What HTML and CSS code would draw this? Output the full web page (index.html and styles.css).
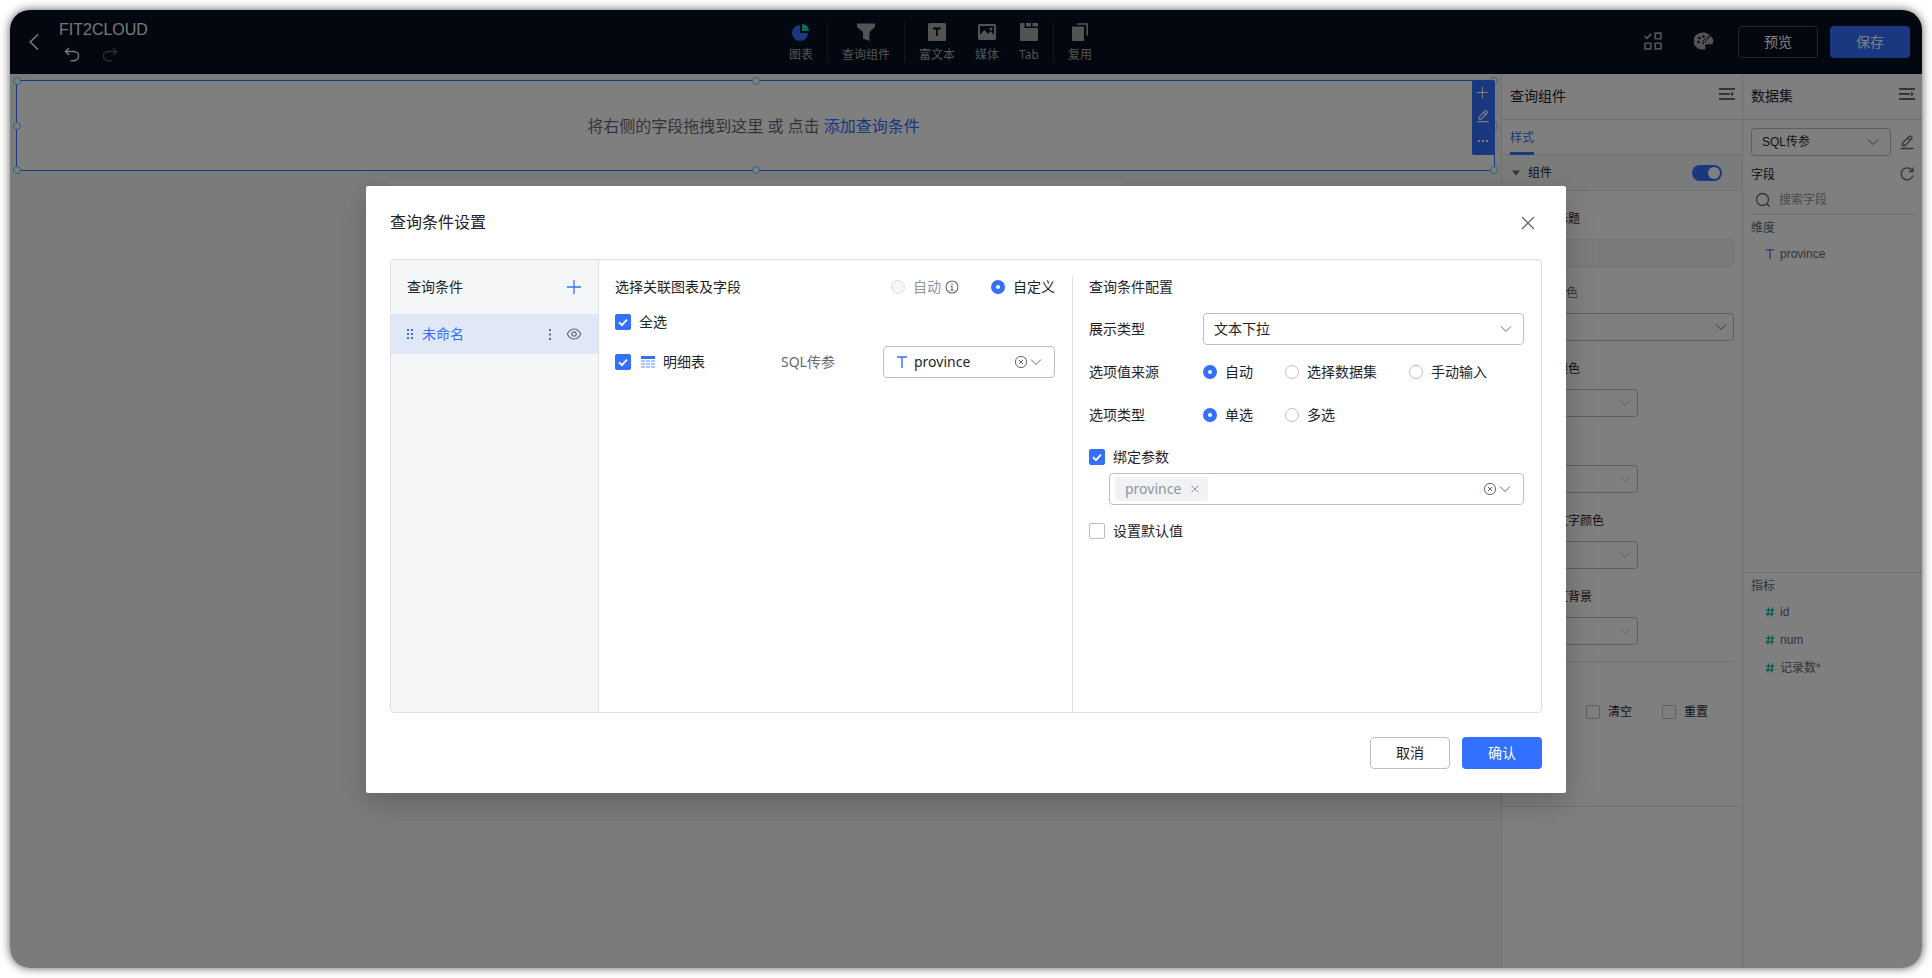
FILE: index.html
```html
<!DOCTYPE html>
<html lang="zh-CN">
<head>
<meta charset="utf-8">
<title>FIT2CLOUD</title>
<link rel="stylesheet" href="styles.css">
</head>
<body>
<svg class="sprite" aria-hidden="true">
  <symbol id="i-chevron" viewBox="0 0 12 12"><path d="M1 3.5l5 5 5-5" fill="none" stroke="currentColor"/></symbol>
  <symbol id="i-clear" viewBox="0 0 14 14"><circle cx="7" cy="7" r="5.6" fill="none" stroke="currentColor"/><path d="M5 5l4 4M9 5l-4 4" stroke="currentColor"/></symbol>
  <symbol id="i-plus" viewBox="0 0 16 16"><path d="M8 1v14M1 8h14" stroke="currentColor" stroke-width="1.3"/></symbol>
  <symbol id="i-edit" viewBox="0 0 16 16"><path d="M3.5 11.5V9L10.4 2.2q.7-.7 1.4 0l1 1q.7.7 0 1.4L6 11.5zM8.8 4l2.4 2.4M1.5 14.5h13" fill="none" stroke="currentColor" stroke-width="1.3"/></symbol>
  <symbol id="i-fold" viewBox="0 0 16 14"><path d="M0 2h16M0 7h11M0 12h16" stroke="currentColor" stroke-width="2"/><path d="M12 4.500v5l3-2.500z" fill="currentColor"/></symbol>
  <symbol id="i-hash" viewBox="0 0 10 10"><path d="M3.8 .5l-1.1 9M7.6 .5l-1.1 9M1 3.2h8.3M.6 6.8h8.3" fill="none" stroke="currentColor" stroke-width="1.2"/></symbol>
  <symbol id="i-text" viewBox="0 0 10 12"><path d="M0 1h10M5 1v11" fill="none" stroke="currentColor" stroke-width="1.4"/></symbol>
</svg>
<div class="window">
  <header class="topbar">
    <div class="brand">
      <button class="icon-btn back" aria-label="返回"><svg width="10" height="16" viewBox="0 0 10 16"><path d="M9 .5L1.2 8 9 15.5" fill="none" stroke="currentColor" stroke-width="1.6"/></svg></button>
      <div class="brand-text">
        <h1>FIT2CLOUD</h1>
        <div class="history">
          <button class="icon-btn" aria-label="撤销"><svg width="16" height="16" viewBox="0 0 16 16"><path d="M5 1L1.5 4.5 5 8M1.5 4.5H10a4.6 4.6 0 0 1 0 9.2H6.5" fill="none" stroke="currentColor" stroke-width="1.4"/></svg></button>
          <button class="icon-btn faded" aria-label="重做"><svg width="16" height="16" viewBox="0 0 16 16"><path d="M11 1l3.500 3.500L11 8M14.500 4.500H6a4.600 4.600 0 0 0 0 9.200h3.500" fill="none" stroke="currentColor" stroke-width="1.400"/></svg></button>
        </div>
      </div>
    </div>
    <nav class="tools">
      <div class="tool-group">
        <button class="tool"><svg width="18" height="18" viewBox="0 0 18 18"><path d="M8 2v8h8a8 8 0 1 1-8-8z" fill="#3370ff"/><path d="M10 1a7 7 0 0 1 7 7h-7z" fill="#00d6b9"/></svg>图表</button>
      </div>
      <div class="tool-group">
        <button class="tool"><svg width="18" height="18" viewBox="0 0 18 18"><path d="M0 .5h18V4l-5.500 5v9L6 15.500V9L0 4z" fill="currentColor"/></svg>查询组件</button>
      </div>
      <div class="tool-group">
        <button class="tool"><svg width="18" height="18" viewBox="0 0 18 18"><rect width="18" height="18" rx="1.500" fill="currentColor"/><path d="M5 5.500h8M9 5.500V13" stroke="#050e21" stroke-width="1.800"/></svg>富文本</button>
        <button class="tool"><svg width="18" height="18" viewBox="0 0 18 18"><rect x="0" y="1" width="18" height="16" rx="1.500" fill="currentColor"/><path d="M2 3h14v9l-3.500-4-2.500 3-3.500-4L2 11.500z" fill="#050e21"/><circle cx="13" cy="6" r="1.500" fill="currentColor"/></svg>媒体</button>
        <button class="tool"><svg width="18" height="18" viewBox="0 0 18 18"><path d="M0 1q0-1 1-1h3.500v5H18v12q0 1-1 1H1q-1 0-1-1zM6 0h5v3.500H6zM12.500 0H17q1 0 1 1v2.500h-5.500z" fill="currentColor"/></svg>Tab</button>
      </div>
      <div class="tool-group">
        <button class="tool"><svg width="18" height="18" viewBox="0 0 18 18"><path d="M1 4q0-.5.5-.5H13V18H2q-1 0-1-1z" fill="currentColor"/><path d="M6 1h10.200v11.500" fill="none" stroke="currentColor" stroke-width="1.600"/></svg>复用</button>
      </div>
    </nav>
    <div class="actions">
      <button class="icon-btn soft" aria-label="批量"><svg width="18" height="18" viewBox="0 0 16 16"><path d="M.5 3.500l2 2.200L6.500 1.500M10 1h5v5h-5zM1 10h5v5H1zM10 10h5v5h-5z" fill="none" stroke="currentColor" stroke-width="1.500"/></svg></button>
      <button class="icon-btn soft" aria-label="配色"><svg width="20" height="18" viewBox="0 0 20 18"><path d="M14.500 2.200A9.500 8.500 0 1 0 9 17.500c2.500.5 3-.8 2.300-2.500-.6-1.600.2-2.800 2-2.800h3.700c2.800 0 2.800-3.500 1.700-6z" fill="currentColor"/><path d="M20 0l-8 9-3.500 3 1-3.500z" fill="currentColor" stroke="#050e21" stroke-width=".8"/><g fill="#050e21"><circle cx="4.500" cy="10" r="1.200"/><circle cx="5.500" cy="6" r="1.200"/><circle cx="9.500" cy="4.500" r="1.200"/></g></svg></button>
      <div class="action-buttons">
        <button class="btn outline-dark">预览</button>
        <button class="btn primary">保存</button>
      </div>
    </div>
  </header>

  <main class="workspace">
    <section class="canvas">
      <div class="query-widget">
        <p>将右侧的字段拖拽到这里 或 点击 <a href="#">添加查询条件</a></p>
        <i class="handle tl"></i><i class="handle tc"></i><i class="handle tr"></i>
        <i class="handle ml"></i><i class="handle mr"></i>
        <i class="handle bl"></i><i class="handle bc"></i><i class="handle br"></i>
        <div class="widget-bar">
          <button class="icon-btn" aria-label="添加"><svg width="13" height="13"><use href="#i-plus"/></svg></button>
          <button class="icon-btn" aria-label="编辑"><svg width="14" height="14"><use href="#i-edit"/></svg></button>
          <button class="icon-btn" aria-label="更多"><svg width="12" height="4" viewBox="0 0 12 4" fill="currentColor"><path d="M1 1h2v2H1zM5 1h2v2H5zM9 1h2v2H9z"/></svg></button>
        </div>
      </div>
      <div class="table-widget"><h2>明细表</h2></div>
    </section>

    <aside class="style-panel">
      <div class="panel-head"><h2>查询组件</h2><button class="icon-btn" aria-label="收起"><svg width="16" height="14"><use href="#i-fold"/></svg></button></div>
      <div class="tabs"><a href="#" class="tab">样式</a></div>
      <div class="section-head">
        <svg width="8" height="6" viewBox="0 0 8 6"><path d="M0 .5h8L4 5.500z" fill="#646a73"/></svg>
        <label for="comp-on">组件</label>
        <input id="comp-on" type="checkbox" class="toggle" checked>
      </div>
      <div class="fields">
        <div class="field-set">
          <div class="field">
            <label class="check"><input type="checkbox" checked>显示标题</label>
            <input type="text" class="box disabled" aria-label="标题" disabled>
          </div>
          <div class="field">
            <label class="sub" for="c1">标题颜色</label>
            <div class="select"><select id="c1"><option></option></select><svg><use href="#i-chevron"/></svg></div>
          </div>
        </div>
        <div class="field">
          <label class="check"><input type="checkbox">边框颜色</label>
          <div class="select short"><select aria-label="边框颜色值"><option></option></select><svg><use href="#i-chevron"/></svg></div>
        </div>
        <div class="field">
          <label class="check"><input type="checkbox">文字</label>
          <div class="select short"><select aria-label="文字值"><option></option></select><svg><use href="#i-chevron"/></svg></div>
        </div>
        <div class="field">
          <label class="check"><input type="checkbox">提示文字颜色</label>
          <div class="select short"><select aria-label="提示文字颜色值"><option></option></select><svg><use href="#i-chevron"/></svg></div>
        </div>
        <div class="field">
          <label class="check"><input type="checkbox">按钮区背景</label>
          <div class="select short"><select aria-label="背景值"><option></option></select><svg><use href="#i-chevron"/></svg></div>
        </div>
      </div>
      <div class="button-set">
        <span>展示按钮</span>
        <div class="checks">
          <label class="check"><input type="checkbox" checked>查询</label>
          <label class="check"><input type="checkbox">清空</label>
          <label class="check"><input type="checkbox">重置</label>
        </div>
      </div>
    </aside>

    <aside class="data-panel">
      <div class="panel-head"><h2>数据集</h2><button class="icon-btn" aria-label="收起"><svg width="16" height="14"><use href="#i-fold"/></svg></button></div>
      <div class="data-source">
        <div class="row">
          <div class="select"><select aria-label="数据集"><option>SQL传参</option></select><svg><use href="#i-chevron"/></svg></div>
          <button class="icon-btn" aria-label="编辑数据集"><svg width="16" height="16"><use href="#i-edit"/></svg></button>
        </div>
        <div class="row between"><span>字段</span><button class="icon-btn" aria-label="刷新"><svg width="16" height="16" viewBox="0 0 16 16"><path d="M13.200 4.500A6 6 0 1 0 14 9.500M14 1.500V5.500H10" fill="none" stroke="currentColor" stroke-width="1.300"/></svg></button></div>
        <label class="search">
          <svg width="16" height="16" viewBox="0 0 16 16"><circle cx="7.500" cy="7.500" r="6" fill="none" stroke="currentColor" stroke-width="1.300"/><path d="M11.800 11.800l3 3" stroke="currentColor" stroke-width="1.300"/></svg>
          <input type="text" placeholder="搜索字段">
        </label>
      </div>
      <div class="dims">
        <h3>维度</h3>
        <ul><li><svg class="blue" width="8" height="10"><use href="#i-text"/></svg>province</li></ul>
      </div>
      <div class="metrics">
        <h3>指标</h3>
        <ul>
          <li><svg class="teal" width="10" height="10"><use href="#i-hash"/></svg>id</li>
          <li><svg class="teal" width="10" height="10"><use href="#i-hash"/></svg>num</li>
          <li><svg class="teal" width="10" height="10"><use href="#i-hash"/></svg>记录数*</li>
        </ul>
      </div>
    </aside>
  </main>

  <div class="overlay">
    <div class="dialog" role="dialog" aria-labelledby="dlg-title">
      <div class="dialog-head">
        <h2 id="dlg-title">查询条件设置</h2>
        <button class="icon-btn" aria-label="关闭"><svg width="14" height="14" viewBox="0 0 14 14"><path d="M1 1l12 12M13 1L1 13" stroke="currentColor" stroke-width="1.300"/></svg></button>
      </div>
      <div class="dialog-body">
        <div class="conditions">
          <div class="cond-head"><h3>查询条件</h3><button class="icon-btn add" aria-label="新增"><svg width="16" height="16"><use href="#i-plus"/></svg></button></div>
          <div class="cond-item">
            <svg class="blue" width="7" height="12" viewBox="0 0 7 12" fill="currentColor"><path d="M0 1h2v2H0zM4 1h2v2H4zM0 5h2v2H0zM4 5h2v2H4zM0 9h2v2H0zM4 9h2v2H4z"/></svg>
            <span class="blue">未命名</span>
            <button class="icon-btn" aria-label="更多"><svg width="16" height="16" viewBox="0 0 16 16" fill="currentColor"><path d="M7 3h2v2H7zM7 7.500h2v2H7zM7 12h2v2H7z"/></svg></button>
            <button class="icon-btn" aria-label="显示"><svg width="16" height="16" viewBox="0 0 16 16"><path d="M1.200 8Q4 3 8 3t6.800 5Q12 13 8 13T1.200 8z" fill="none" stroke="currentColor" stroke-width="1.200"/><circle cx="8" cy="8" r="2.200" fill="none" stroke="currentColor" stroke-width="1.200"/></svg></button>
          </div>
        </div>
        <div class="relations">
          <div class="rel-head">
            <h3>选择关联图表及字段</h3>
            <div class="radios">
              <label class="radio off"><input type="radio" name="mode" disabled>自动<svg width="14" height="14" viewBox="0 0 14 14"><circle cx="7" cy="7" r="6" fill="none" stroke="#646a73" stroke-width="1.100"/><path d="M7 3.200v1.500M5.500 6.200H7v4M5.300 10.200h3.400" fill="none" stroke="#646a73" stroke-width="1.100"/></svg></label>
              <label class="radio"><input type="radio" name="mode" checked>自定义</label>
            </div>
          </div>
          <label class="check big"><input type="checkbox" checked>全选</label>
          <div class="rel-row">
            <label class="check big"><input type="checkbox" checked><svg class="tbl" width="14" height="14" viewBox="1 0 14 14"><path d="M1 1h14v3H1z" fill="#3370ff"/><path d="M1 5h4v2H1zM6 5h4v2H6zM11 5h4v2h-4zM1 8h4v2H1zM6 8h4v2H6zM11 8h4v2h-4zM1 11h4v2H1zM6 11h4v2H6zM11 11h4v2h-4z" fill="#adc6ff"/></svg>明细表</label>
            <span class="ds">SQL传参</span>
            <div class="combo">
              <svg class="blue" width="10" height="12"><use href="#i-text"/></svg>
              <select aria-label="字段"><option>province</option></select>
              <button class="icon-btn" aria-label="清除"><svg width="14" height="14"><use href="#i-clear"/></svg></button>
              <svg width="12" height="12"><use href="#i-chevron"/></svg>
            </div>
          </div>
        </div>
        <div class="config">
          <h3>查询条件配置</h3>
          <div class="form-row"><label for="show-type">展示类型</label><div class="select large"><select id="show-type"><option>文本下拉</option></select><svg><use href="#i-chevron"/></svg></div></div>
          <div class="form-row"><span>选项值来源</span><div class="radios">
            <label class="radio"><input type="radio" name="src" checked>自动</label>
            <label class="radio"><input type="radio" name="src">选择数据集</label>
            <label class="radio"><input type="radio" name="src">手动输入</label></div></div>
          <div class="form-row"><span>选项类型</span><div class="radios">
            <label class="radio"><input type="radio" name="kind" checked>单选</label>
            <label class="radio"><input type="radio" name="kind">多选</label></div></div>
          <div class="bind">
            <label class="check big"><input type="checkbox" checked>绑定参数</label>
            <div class="combo tags">
              <span class="tag">province<button class="icon-btn" aria-label="移除"><svg width="8" height="8" viewBox="0 0 8 8"><path d="M.5 .5l7 7M7.500 .5l-7 7" stroke="currentColor"/></svg></button></span>
              <input type="text" aria-label="参数">
              <button class="icon-btn" aria-label="清除"><svg width="14" height="14"><use href="#i-clear"/></svg></button>
              <svg width="12" height="12"><use href="#i-chevron"/></svg>
            </div>
          </div>
          <label class="check big"><input type="checkbox">设置默认值</label>
        </div>
      </div>
      <div class="dialog-foot">
        <button class="btn outline">取消</button>
        <button class="btn primary">确认</button>
      </div>
    </div>
  </div>
</div>
</body>
</html>
```

FILE: styles.css
```css
* { box-sizing: border-box; }
body {
  margin: 0;
  padding: 10px;
  background: #fff;
  color: #1f2329;
  font: 14px/22px "Noto Sans", "Noto Sans CJK SC", sans-serif;
}
h1, h2, h3, p, ul { margin: 0; padding: 0; font-weight: 400; }
ul { list-style: none; }
a { color: #3370ff; text-decoration: none; }
button, input, select { font: inherit; color: inherit; margin: 0; }
svg { flex: none; display: block; }
.sprite { position: absolute; width: 0; height: 0; }
.blue { color: #3370ff; }
.teal { color: #04b49c; }

.window {
  position: relative;
  display: flex;
  flex-direction: column;
  min-height: calc(100vh - 20px);
  border-radius: 20px;
  overflow: hidden;
  box-shadow: 0 0 10px rgba(0, 0, 0, .65);
}

.icon-btn {
  display: grid;
  place-items: center;
  border: 0;
  padding: 0;
  background: none;
  color: #646a73;
}
.icon-btn.add { color: #3370ff; }
.btn {
  width: 80px;
  height: 32px;
  border: 1px solid transparent;
  border-radius: 4px;
  padding: 0;
}
.btn.primary { background: #3370ff; color: #fff; }
.btn.outline { background: #fff; border-color: #bbbfc4; }
.btn.outline-dark { background: none; border-color: #4b505c; color: #fff; }

/* Top bar */
.topbar {
  display: flex;
  align-items: center;
  height: 64px;
  padding-right: 12px;
  background: #050e21;
  color: #a6a6a6;
}
.topbar .icon-btn { color: #f0f0f0; }
.topbar .icon-btn.faded { color: #5a5a5f; }
.topbar .icon-btn.soft { color: #a6a6a6; padding-bottom: 2px; }
.brand { display: flex; align-items: center; gap: 20px; width: 227px; padding-left: 19px; }
.brand-text { padding-bottom: 2px; }
.brand h1 { font: 16px/22px "Liberation Sans", sans-serif; color: #fff; opacity: .92; }
.history { display: flex; gap: 22px; padding-left: 5px; margin-top: 6px; }
.tools { display: flex; flex: 1; justify-content: center; }
.tool-group { display: flex; gap: 20px; height: 40px; padding: 0 14px; border-left: 1px solid #2a3142; }
.tool-group:first-child { border-left: 0; }
.tool {
  display: flex;
  flex-direction: column;
  align-items: center;
  gap: 5px;
  padding: 1px 0 0;
  border: 0;
  background: none;
  font-size: 12px;
  line-height: 18px;
}
.actions { display: flex; align-items: center; gap: 32px; }
.action-buttons { display: flex; gap: 12px; margin-left: -8px; }

/* Workspace */
.workspace { display: grid; grid-template-columns: 1fr 241px 180px; flex: 1; }
.canvas { padding: 6px; background: #f5f8f7; }
.query-widget {
  position: relative;
  display: grid;
  place-items: center;
  height: 91px;
  padding-right: 4px;
  border: 1px solid #3370ff;
  background: #fff;
  color: #646a73;
  font-size: 16px;
}
.table-widget { margin: 9px 372px; padding: 4px 8px; background: #fff; }
.table-widget h2 { font-size: 16px; font-weight: 700; }
.handle {
  position: absolute;
  width: 8px;
  height: 8px;
  border: 1px solid #59c7f9;
  border-radius: 50%;
  background: #fff;
  transform: translate(-50%, -50%);
}
.tl, .tc, .tr { top: 0; }
.ml, .mr { top: 50%; }
.bl, .bc, .br { top: 100%; }
.tl, .ml, .bl { left: 0; }
.tc, .bc { left: 50%; }
.tr, .mr, .br { left: 100%; }
.widget-bar {
  position: absolute;
  top: -1px;
  right: -1px;
  display: flex;
  flex-direction: column;
  justify-content: space-around;
  width: 23px;
  height: 75px;
  padding: 0 2px 2px 0;
  border-radius: 2px;
  background: #3370ff;
}
.widget-bar .icon-btn { color: #fff; height: 20px; }

.style-panel, .data-panel {
  border-left: 1px solid #dee0e3;
  background: #fff;
  font: 12px/20px "Liberation Sans", "Noto Sans CJK SC", sans-serif;
}
.panel-head {
  display: flex;
  justify-content: space-between;
  align-items: center;
  height: 46px;
  padding: 0 7px 2px 8px;
  border-bottom: 1px solid #dee0e3;
}
.panel-head h2 { font-size: 14px; }
.panel-head .icon-btn { padding-bottom: 3px; }
.tabs { display: flex; height: 35px; padding: 0 8px; border-bottom: 1px solid #dee0e3; }
.tab { margin-bottom: -1px; border-bottom: 3px solid #3370ff; line-height: 36px; height: 35px; }
.section-head {
  display: flex;
  align-items: center;
  gap: 8px;
  height: 36px;
  padding: 0 20px 0 10px;
  border-bottom: 1px solid #dee0e3;
  background: #f5f8f7;
}
.toggle {
  appearance: none;
  display: flex;
  justify-content: flex-end;
  width: 30px;
  height: 16px;
  margin-left: auto;
  padding: 2px;
  border-radius: 8px;
  background: #3370ff;
}
.toggle::after { content: ""; width: 12px; height: 12px; border-radius: 50%; background: #fff; }
.fields {
  display: flex;
  flex-direction: column;
  gap: 18px;
  margin: 0 8px;
  padding: 18px 0 16px;
  border-bottom: 1px solid #dee0e3;
}
.field-set { display: grid; gap: 16px; }
.field { display: grid; gap: 10px; }
.sub { padding-left: 20px; color: #646a73; }
.box { height: 28px; width: 100%; border: 1px solid #bbbfc4; border-radius: 4px; }
.box.disabled { background: #f5f7fa; border-color: #e4e7ed; }
.select { position: relative; height: 28px; }
.select.short { width: 128px; }
.select.short svg { color: #bbbfc4; }
.select select {
  appearance: none;
  width: 100%;
  height: 100%;
  padding: 0 10px;
  border: 1px solid #bbbfc4;
  border-radius: 4px;
  background: #fff;
}
.select svg {
  position: absolute;
  top: calc(50% - 6px);
  right: 12px;
  width: 12px;
  height: 12px;
  color: #646a73;
  pointer-events: none;
}
.field .select svg { right: 7px; }
.select.large { flex: 1; height: 32px; }
.button-set { display: grid; gap: 10px; padding: 10px 8px 84px; border-bottom: 1px solid #dee0e3; }
.checks { display: flex; gap: 30px; }

.check { display: flex; align-items: center; gap: 8px; }
.check input {
  appearance: none;
  flex: none;
  width: 14px;
  height: 14px;
  border: 1px solid #bbbfc4;
  border-radius: 2px;
  background: #fff;
}
.check.big input { width: 16px; height: 16px; }
.check input:checked {
  border-color: #3370ff;
  background: #3370ff url("data:image/svg+xml,%3Csvg xmlns='http://www.w3.org/2000/svg' viewBox='0 0 14 14'%3E%3Cpath d='M3 7.200l2.900 2.900L11 4.600' fill='none' stroke='white' stroke-width='1.800'/%3E%3C/svg%3E") center / 14px;
}

/* Dataset panel */
.data-panel { display: flex; flex-direction: column; }
.data-source { display: grid; grid-template-columns: minmax(0, 1fr); padding: 8px 7px 0 8px; }
.row { display: flex; align-items: center; gap: 8px; }
.row .select { flex: 1; }
.between { justify-content: space-between; height: 34px; padding-top: 4px; }
.between .icon-btn { padding-bottom: 3px; }
.search {
  display: flex;
  align-items: center;
  gap: 8px;
  height: 25px;
  padding: 0 4px 5px;
  border-bottom: 1px solid #dee0e3;
  color: #646a73;
}
.search input { flex: 1; min-width: 0; padding: 0; border: 0; background: none; outline: 0; }
.search input::placeholder { color: #8f959e; }
.dims { flex: 9; padding: 3px 8px; color: #646a73; }
.metrics { flex: 10; padding: 3px 8px; border-top: 1px solid #dee0e3; color: #646a73; }
.data-panel h3 { font-size: 12px; }
.data-panel li { display: flex; align-items: center; gap: 5px; height: 28px; padding-left: 14px; }
.data-panel li svg { width: 10px; }
.data-panel ul { margin-top: 2px; }

/* Dialog */
.overlay {
  position: absolute;
  inset: 0;
  display: flex;
  justify-content: center;
  align-items: flex-start;
  padding-top: 176px;
  background: rgba(0, 0, 0, .5);
}
.dialog {
  display: flex;
  flex-direction: column;
  gap: 24px;
  width: 1200px;
  max-width: 100%;
  padding: 24px;
  border-radius: 2px;
  background: #fff;
  box-shadow: 0 12px 32px rgba(0, 0, 0, .12), 0 8px 20px rgba(0, 0, 0, .08);
}
.dialog-head { display: flex; justify-content: space-between; align-items: center; padding-right: 7px; }
.dialog-head h2 { font-size: 16px; line-height: 25px; }
.dialog-body {
  display: grid;
  grid-template-columns: 208px 474px 1fr;
  min-height: 454px;
  border: 1px solid #dee0e3;
  border-radius: 4px;
  overflow: hidden;
}
.dialog h3 { font-size: 14px; }
.conditions { border-right: 1px solid #dee0e3; background: #f5f6f7; }
.cond-head { display: flex; justify-content: space-between; align-items: center; padding: 16px; height: 54px; }
.cond-item {
  display: flex;
  align-items: center;
  gap: 8px;
  height: 40px;
  padding: 0 16px;
  background: #e0e8f8;
}
.cond-item span { flex: 1; }
.relations { margin-top: 16px; padding: 0 17px 0 16px; border-right: 1px solid #dee0e3; }
.rel-head { display: flex; justify-content: space-between; margin-bottom: 13px; }
.radios { display: flex; gap: 32px; }
.radio { display: flex; align-items: center; gap: 8px; }
.radio.off { color: #8f959e; }
.radio svg { margin-left: -4px; }
.radio input {
  appearance: none;
  width: 14px;
  height: 14px;
  border: 1px solid #bbbfc4;
  border-radius: 50%;
  background: #fff;
}
.radio input:checked { border: 5px solid #3370ff; }
.radio input:disabled { border-color: #dee0e3; background: #f5f6f7; }
.rel-row { display: flex; align-items: center; margin-top: 13px; }
.rel-row .check { width: 166px; }
.tbl { margin-left: 2px; }
.ds { flex: 1; color: #646a73; }
.combo {
  display: flex;
  align-items: center;
  gap: 2px;
  width: 172px;
  height: 32px;
  padding: 0 12px 0 13px;
  border: 1px solid #bbbfc4;
  border-radius: 4px;
  color: #646a73;
}
.combo select, .combo input {
  appearance: none;
  flex: 1;
  min-width: 0;
  padding: 0 0 0 5px;
  border: 0;
  background: none;
  color: #1f2329;
}
.config { display: flex; flex-direction: column; padding: 16px 17px 16px 16px; }
.config h3 { margin-bottom: 9px; }
.form-row { display: flex; align-items: center; min-height: 43px; }
.form-row > :first-child { flex: none; width: 114px; }
.bind { padding: 10px 0 15px; }
.bind .combo { margin: 5px 0 0 20px; width: auto; padding-left: 5px; }
.tag {
  display: flex;
  align-items: center;
  gap: 10px;
  height: 24px;
  padding: 0 9px 0 10px;
  border-radius: 2px;
  background: #f0f2f5;
  color: #8f959e;
}
.tag .icon-btn { color: #8f959e; }
.dialog-foot { display: flex; justify-content: flex-end; gap: 12px; }
```
